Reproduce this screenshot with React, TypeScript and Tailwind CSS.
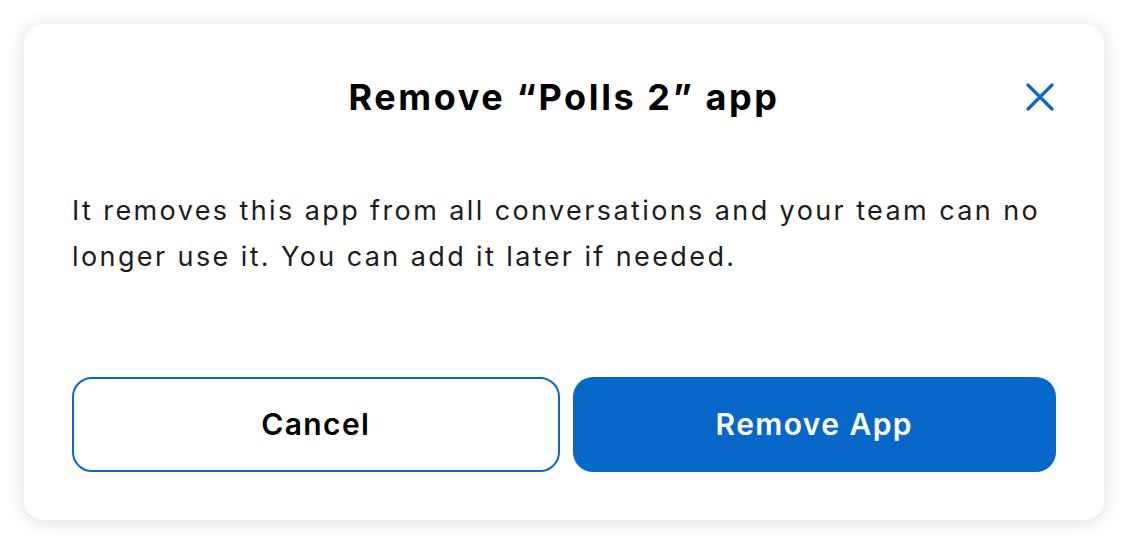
const FONT = { fontFamily: 'Inter, "Open Sans", system-ui, sans-serif' };

export default function App() {
  return (
    <div className="w-full h-[544px] bg-white p-6" style={FONT}>
      <div className="flex h-[496px] w-[1080px] flex-col rounded-[20px] bg-white px-12 pb-12 pt-[51px] shadow-[0_2px_18px_rgba(0,0,0,0.14)]">
        <div className="grid grid-cols-[1fr_auto_1fr] items-center">
          <div />
          <h1 className="text-[36px] font-bold leading-[44px] tracking-[2.6px] text-black">Remove “Polls 2” app</h1>
          <button className="justify-self-end mr-[2px] text-[#0a68c9]" aria-label="Close">
            <svg width="28" height="28" viewBox="0 0 28 28" fill="none" stroke="currentColor" strokeWidth="3.2" strokeLinecap="round">
              <path d="M2 2L26 26M26 2L2 26" />
            </svg>
          </button>
        </div>

        <p className="mt-[69px] text-[27px] leading-[46px] tracking-[2.4px] text-[#1c1c1e]">
          It removes this app from all conversations and your team can no longer use it. You can add it later if needed.
        </p>

        <div className="mt-auto flex gap-[13px]">
          <button className="flex h-[95px] flex-1 items-center justify-center rounded-[20px] border-2 border-[#0a68c9] bg-white text-[30px] font-semibold tracking-[1.4px] text-black">
            Cancel
          </button>
          <button className="flex h-[95px] flex-1 items-center justify-center rounded-[20px] bg-[#0868c9] text-[30px] font-semibold tracking-[1.4px] text-white">
            Remove App
          </button>
        </div>
      </div>
    </div>
  );
}
